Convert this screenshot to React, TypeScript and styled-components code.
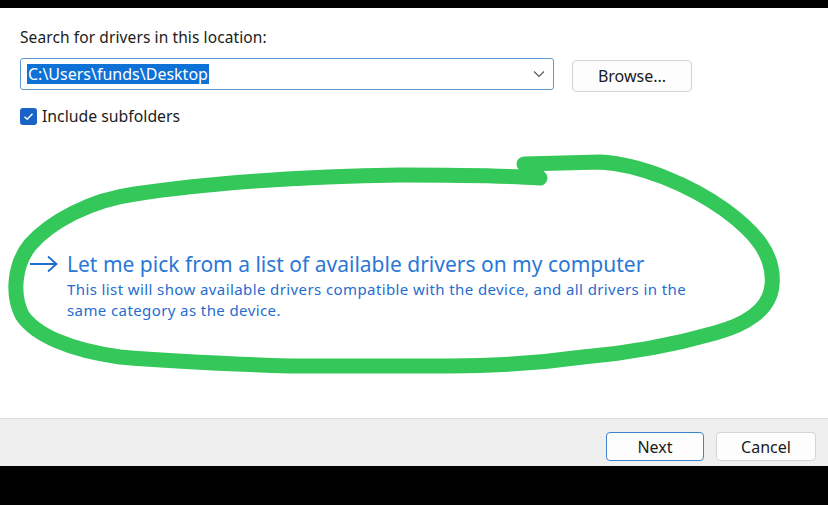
import React from "react";
import styled, { createGlobalStyle } from "styled-components";

const Global = createGlobalStyle`
  html, body { margin: 0; padding: 0; background: #000; }
  body { font-family: "Noto Sans", "Open Sans", sans-serif; }
`;

const Screen = styled.div`
  position: relative;
  width: 828px;
  height: 505px;
  display: flex;
  flex-direction: column;
  background: #000;
  overflow: hidden;
`;

const BlackBar = styled.div<{ $h: number }>`
  height: ${(p) => p.$h}px;
  flex: none;
  background: #000;
`;

const Body = styled.div`
  flex: 1;
  background: #fff;
  display: flex;
  flex-direction: column;
  padding: 19px 0 0 20px;
`;

const Label = styled.div`
  font-size: 15.5px;
  letter-spacing: 0.1px;
  color: #1b1b1b;
  line-height: 21px;
`;

const InputRow = styled.div`
  display: flex;
  align-items: flex-start;
  gap: 18px;
  margin-top: 10px;
`;

const Combo = styled.div`
  width: 534px;
  height: 32px;
  box-sizing: border-box;
  border: 1px solid #5f9bd3;
  border-radius: 3px;
  display: flex;
  align-items: center;
  padding: 0 8px 0 6px;
`;

const Selected = styled.span`
  background: #0d71d6;
  color: #fff;
  font-size: 16px;
  line-height: 20px;
  padding: 0 1px;
`;

const Chevron = styled.svg`
  margin-left: auto;
`;

const Button = styled.div<{ $w: number; $h: number; $primary?: boolean }>`
  width: ${(p) => p.$w}px;
  height: ${(p) => p.$h}px;
  box-sizing: border-box;
  border: 1px solid ${(p) => (p.$primary ? "#3d84cf" : "#d3d3d3")};
  border-radius: 4px;
  background: #fdfdfd;
  display: flex;
  align-items: center;
  justify-content: center;
  font-size: 16px;
  color: #1b1b1b;
`;

const BrowseButton = styled(Button)`
  margin-top: 2px;
`;

const CheckRow = styled.div`
  display: flex;
  align-items: center;
  gap: 5px;
  margin-top: 13px;
  font-size: 15.8px;
  color: #1b1b1b;
`;

const Box = styled.div`
  width: 17px;
  height: 17px;
  border-radius: 3px;
  background: #1a63c6;
  display: flex;
  align-items: center;
  justify-content: center;
`;

const Link = styled.div`
  margin-top: 124px;
  display: flex;
  flex-direction: column;
  padding-left: 9px;
`;

const TitleRow = styled.div`
  display: flex;
  align-items: center;
  gap: 9px;
`;

const Title = styled.div`
  font-size: 21px;
  line-height: 26px;
  color: #2a78d6;
`;

const Desc = styled.div`
  margin-left: 38px;
  margin-top: 2px;
  width: 635px;
  font-size: 15px;
  letter-spacing: 0.4px;
  line-height: 21px;
  color: #1f6dd0;
`;

const Footer = styled.div`
  height: 48px;
  flex: none;
  box-sizing: border-box;
  background: #efefef;
  border-top: 1px solid #dcdcdc;
  display: flex;
  justify-content: flex-end;
  align-items: flex-start;
  gap: 12px;
  padding: 13px 12px 0 0;
`;

const Overlay = styled.svg`
  position: absolute;
  left: 0;
  top: 0;
  pointer-events: none;
`;

export default function App() {
  return (
    <Screen>
      <Global />
      <BlackBar $h={8} />
      <Body>
        <Label>Search for drivers in this location:</Label>
        <InputRow>
          <Combo>
            <Selected>C:\Users\funds\Desktop</Selected>
            <Chevron width="12" height="8" viewBox="0 0 12 8">
              <path d="M1 1.5 L6 6.5 L11 1.5" fill="none" stroke="#555" strokeWidth="1.1" />
            </Chevron>
          </Combo>
          <BrowseButton $w={120} $h={32}>Browse...</BrowseButton>
        </InputRow>
        <CheckRow>
          <Box>
            <svg width="11" height="9" viewBox="0 0 11 9">
              <path d="M1.5 4.8 L4.2 7.3 L9.5 1.8" fill="none" stroke="#fff" strokeWidth="1.4" />
            </svg>
          </Box>
          Include subfolders
        </CheckRow>
        <Link>
          <TitleRow>
            <svg width="29" height="18" viewBox="0 0 29 18">
              <path d="M1 9 H27 M19 1.5 L27.5 9 L19 16.5" fill="none" stroke="#1f6dd0" strokeWidth="1.8" />
            </svg>
            <Title>Let me pick from a list of available drivers on my computer</Title>
          </TitleRow>
          <Desc>
            This list will show available drivers compatible with the device, and all drivers in the
            same category as the device.
          </Desc>
        </Link>
      </Body>
      <Footer>
        <Button $w={98} $h={29} $primary>Next</Button>
        <Button $w={100} $h={29}>Cancel</Button>
      </Footer>
      <BlackBar $h={39} />
      <Overlay width="828" height="505" viewBox="0 0 828 505">
        <path
          d="M524 164 L600 162 C640 164 690 185 725 210 C755 232 775 255 772 285 C770 310 745 325 715 333 C680 343 630 353 583 357 C540 363 500 366 450 366 L290 366 C230 364 180 362 120 357 C70 350 35 335 22 315 C12 295 14 265 30 245 C50 222 90 200 135 194 C200 184 300 176 400 175 C460 175 510 176 540 178 L527 166"
          fill="none"
          stroke="#34c759"
          strokeWidth="15"
          strokeLinecap="round"
          strokeLinejoin="round"
        />
      </Overlay>
    </Screen>
  );
}
